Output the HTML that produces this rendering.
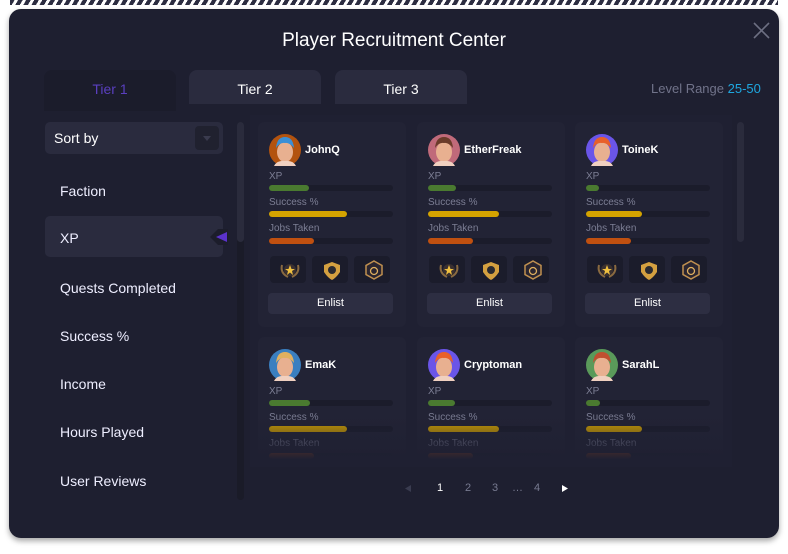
<!DOCTYPE html>
<html><head><meta charset="utf-8"><style>
*{margin:0;padding:0;box-sizing:border-box}
body{width:788px;height:554px;background:#fff;position:relative;overflow:hidden;font-family:"Liberation Sans","DejaVu Sans",sans-serif;color:#fff}
.stripe{position:absolute;left:10px;top:0;width:768px;height:5px;background:repeating-linear-gradient(120deg,#2b2c40 0 4px,#fff 4px 7px)}
.panel{position:absolute;left:9px;top:9px;width:770px;height:529px;background:#1e1f30;border-radius:12px;box-shadow:0 3px 6px rgba(0,0,0,.35)}
.abs{position:absolute}
.title{left:0;width:788px;top:30px;text-align:center;font-size:19px}
.tab{top:70px;height:34px;width:132px;background:#2a2b3e;border-radius:8px 8px 0 0;text-align:center;line-height:38px;font-size:14px}
.side{left:60px;font-size:14px;color:#eef}
.card{width:148px;height:205px;background:#222335;border-radius:6px}
.nm{font-size:11px;font-weight:bold}
.lb{font-size:10px;color:#7c7e94}
.track{height:6px;width:124px;background:#1b1c2b;border-radius:3px}
.bar{height:6px;border-radius:3px}
.ic{width:36px;height:27px;background:#1b1c2b;border-radius:4px}
.btn{width:125px;height:21px;background:#2d2e42;border-radius:4px;font-size:11px;text-align:center;line-height:21px}
.pg{top:482px;font-size:11px;color:#777a90}
#clip{position:absolute;left:250px;top:115px;width:482px;height:352px;overflow:hidden;background:#1f2032}
</style></head><body>
<div class="stripe"></div>
<div class="panel"></div>
<div class="abs title">Player Recruitment Center</div>
<svg class="abs" style="left:753px;top:22px" width="17" height="17"><path d="M1 1L16 16M16 1L1 16" stroke="#6d6f82" stroke-width="1.6"/></svg>
<div class="abs tab" style="left:44px;height:41px;background:#1b1c2b;color:#5a3fbf;line-height:38px">Tier 1</div>
<div class="abs tab" style="left:189px">Tier 2</div>
<div class="abs tab" style="left:335px">Tier 3</div>
<div class="abs" style="left:651px;top:81px;font-size:13px;color:#71738a">Level Range <span style="color:#1ea7e0">25-50</span></div>

<div class="abs" style="left:45px;top:122px;width:178px;height:32px;background:#2a2b3e;border-radius:5px"></div>
<div class="abs" style="left:54px;top:130px;font-size:14px">Sort by</div>
<div class="abs" style="left:195px;top:126px;width:24px;height:24px;background:#20212f;border-radius:4px"></div>
<svg class="abs" style="left:203px;top:136px" width="8" height="5"><path d="M0 0H8L4 5Z" fill="#3a3b4e"/></svg>
<div class="abs" style="left:45px;top:216px;width:178px;height:41px;background:#2a2b3e;border-radius:5px"></div>
<svg class="abs" style="left:210px;top:229px" width="18" height="16"><path d="M0 8L8 0H18V16H8Z" fill="#1c1d2b"/><path d="M6 8L17 3V13Z" fill="#5b32cc"/></svg>
<div class="abs side" style="top:183px">Faction</div>
<div class="abs side" style="top:230px">XP</div>
<div class="abs side" style="top:280px">Quests Completed</div>
<div class="abs side" style="top:328px">Success %</div>
<div class="abs side" style="top:376px">Income</div>
<div class="abs side" style="top:424px">Hours Played</div>
<div class="abs side" style="top:473px">User Reviews</div>
<div class="abs" style="left:237px;top:122px;width:7px;height:378px;background:#1a1b28;border-radius:4px"></div>
<div class="abs" style="left:237px;top:122px;width:7px;height:120px;background:#2a2b3c;border-radius:4px"></div>
<div class="abs" style="left:737px;top:122px;width:7px;height:120px;background:#2a2b3c;border-radius:4px"></div>

<div id="clip"><div id="cards"></div>
<div class="abs" style="left:0;top:300px;width:482px;height:52px;background:linear-gradient(rgba(31,32,50,0),#1f2032 85%)"></div></div>

<svg class="abs" style="left:405px;top:485px" width="6" height="7"><path d="M6 0V7L0 3.5Z" fill="#3a3c50"/></svg>
<div class="abs pg" style="left:437px;color:#fff">1</div>
<div class="abs pg" style="left:465px">2</div>
<div class="abs pg" style="left:492px">3</div>
<div class="abs pg" style="left:512px">…</div>
<div class="abs pg" style="left:534px">4</div>
<svg class="abs" style="left:562px;top:485px" width="6" height="7"><path d="M0 0V7L6 3.5Z" fill="#fff"/></svg>

<script>
const data=[
[258,122,'JohnQ','#b3530f','#3a8fd6',40,78,45],
[417,122,'EtherFreak','#c06a7a','#6b3c2a',28,71,45],
[575,122,'ToineK','#6a55e8','#e8602a',13,56,45],
[258,337,'EmaK','#3a7fc0','#e0b060',41,78,45],
[417,337,'Cryptoman','#6a55e8','#e8602a',27,71,45],
[575,337,'SarahL','#5a9a5a','#c05030',14,56,45]];
let h='';
for(let [x,y,n,bg,hair,a,b,c] of data){
x-=250;y-=115;
const bx=x+11;
h+=`<div class="abs card" style="left:${x}px;top:${y}px"></div>
<svg class="abs" style="left:${bx}px;top:${y+12}px" width="32" height="32"><circle cx="16" cy="16" r="16" fill="${bg}"/><ellipse cx="16" cy="18" rx="8" ry="10" fill="#e8b090"/><path d="M7 14Q8 3 16 3Q24 3 25 14Q20 8 16 9Q11 8 7 14Z" fill="${hair}"/><path d="M5 32Q8 26 16 27Q24 26 27 32Z" fill="#f0d0c0"/></svg>
<div class="abs nm" style="left:${x+47}px;top:${y+22}px">${n}</div>
<div class="abs lb" style="left:${bx}px;top:${y+49}px">XP</div>
<div class="abs track" style="left:${bx}px;top:${y+63}px"><div class="bar" style="width:${a}px;background:#4a7a30"></div></div>
<div class="abs lb" style="left:${bx}px;top:${y+75}px">Success %</div>
<div class="abs track" style="left:${bx}px;top:${y+89}px"><div class="bar" style="width:${b}px;background:#d4a300"></div></div>
<div class="abs lb" style="left:${bx}px;top:${y+101}px">Jobs Taken</div>
<div class="abs track" style="left:${bx}px;top:${y+116}px"><div class="bar" style="width:${c}px;background:#c05010"></div></div>`;
if(y<100){
for(let i=0;i<3;i++){const ix=x+16+i*42;
h+=`<div class="abs ic" style="left:${ix-4}px;top:${y+134}px"></div>`;}
h+=`<svg class="abs" style="left:${x+20}px;top:${y+137}px" width="120" height="22">
<path d="M4 6Q2 14 10 18M20 6Q22 14 14 18" stroke="#8a6a40" stroke-width="2" fill="none"/><circle cx="12" cy="11" r="6" fill="#3a3030"/><path d="M12 6L13.5 10H17L14 12L15 16L12 13.5L9 16L10 12L7 10H10.5Z" fill="#f0c040"/>
<path d="M54 3L62 6V13Q58 19 54 21Q50 19 46 13V6Z" fill="#d4a040"/><circle cx="54" cy="11" r="4" fill="#2a2a30"/>
<path d="M96 2L104 6.5V15.5L96 20L88 15.5V6.5Z" fill="#2a2530" stroke="#c09050" stroke-width="1.5"/><circle cx="96" cy="12" r="3.5" stroke="#e0b060" fill="none" stroke-width="1.3"/></svg>
<div class="abs btn" style="left:${x+10}px;top:${y+171}px">Enlist</div>`;}
}
document.getElementById('cards').innerHTML=h;
</script>
</body></html>
